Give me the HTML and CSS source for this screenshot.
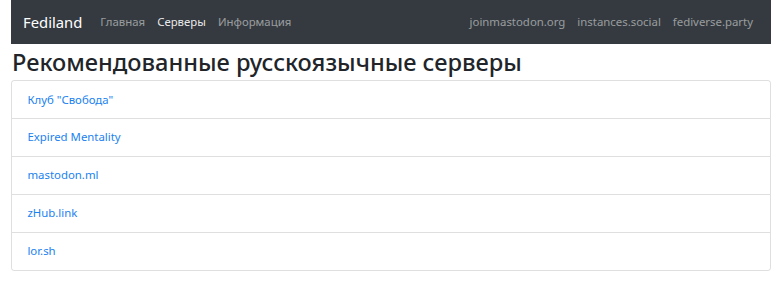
FILE: index.html
```html
<!DOCTYPE html>
<html lang="ru">
<head>
    <meta charset="UTF-8">
    <meta name="viewport" content="width=device-width, initial-scale=1.0">
    <title>Fediland</title>
    <link rel="stylesheet" href="styles.css">
</head>

<body>
<div class="container">
    <nav class="navbar">
        <a class="brand" href="#">Fediland</a>
        <div class="nav">
            <a class="nav-link" href="#">Главная</a>
            <a class="nav-link active" href="#">Серверы</a>
            <a class="nav-link" href="#">Информация</a>
        </div>
        <div class="nav nav-right">
            <a class="nav-link" href="#">joinmastodon.org</a>
            <a class="nav-link" href="#">instances.social</a>
            <a class="nav-link" href="#">fediverse.party</a>
        </div>
    </nav>

    <h1 class="title">Рекомендованные русскоязычные серверы</h1>

    <div class="list-group">
        <a class="list-item" href="#">Клуб "Свобода"</a>
        <a class="list-item" href="#">Expired Mentality</a>
        <a class="list-item" href="#">mastodon.ml</a>
        <a class="list-item" href="#">zHub.link</a>
        <a class="list-item" href="#">lor.sh</a>
    </div>
</div>
</body>
</html>
```

FILE: styles.css
```css
/* base */
body {
    margin: 0;
    font-family: "Noto Sans", "Open Sans", sans-serif;
    font-size: 11.4px;
    line-height: 18.5px;
    color: #212529;
    background-color: #fff;
}

a {
    text-decoration: none;
}

.container {
    margin: 0 11px;
}

/* navbar */
.navbar {
    display: flex;
    align-items: center;
    height: 44px;
    padding: 0 12px;
    background-color: #343a40;
}
.brand {
    font-size: 14.8px;
    color: #fff;
    margin-right: 12px;
}
.nav {
    display: flex;
}
.nav-right {
    margin-left: auto;
}
.nav-link {
    padding: 0 6px;
    color: rgba(255, 255, 255, .5);
}
.nav-link.active {
    color: rgba(255, 255, 255, .9);
}

/* heading */
.title {
    margin: 4px 0 4px 1px;
    font-size: 23.6px;
    font-weight: 500;
    line-height: 1.2;
}

/* list */
.list-group {
    display: flex;
    flex-direction: column;
    border: 1px solid rgba(0, 0, 0, .125);
    border-radius: 3px;
}
.list-item {
    padding: 9.2px 15.4px;
    color: #1a82f0;
    border-top: 1px solid rgba(0, 0, 0, .125);
}
.list-item:first-child {
    border-top: none;
}
```
